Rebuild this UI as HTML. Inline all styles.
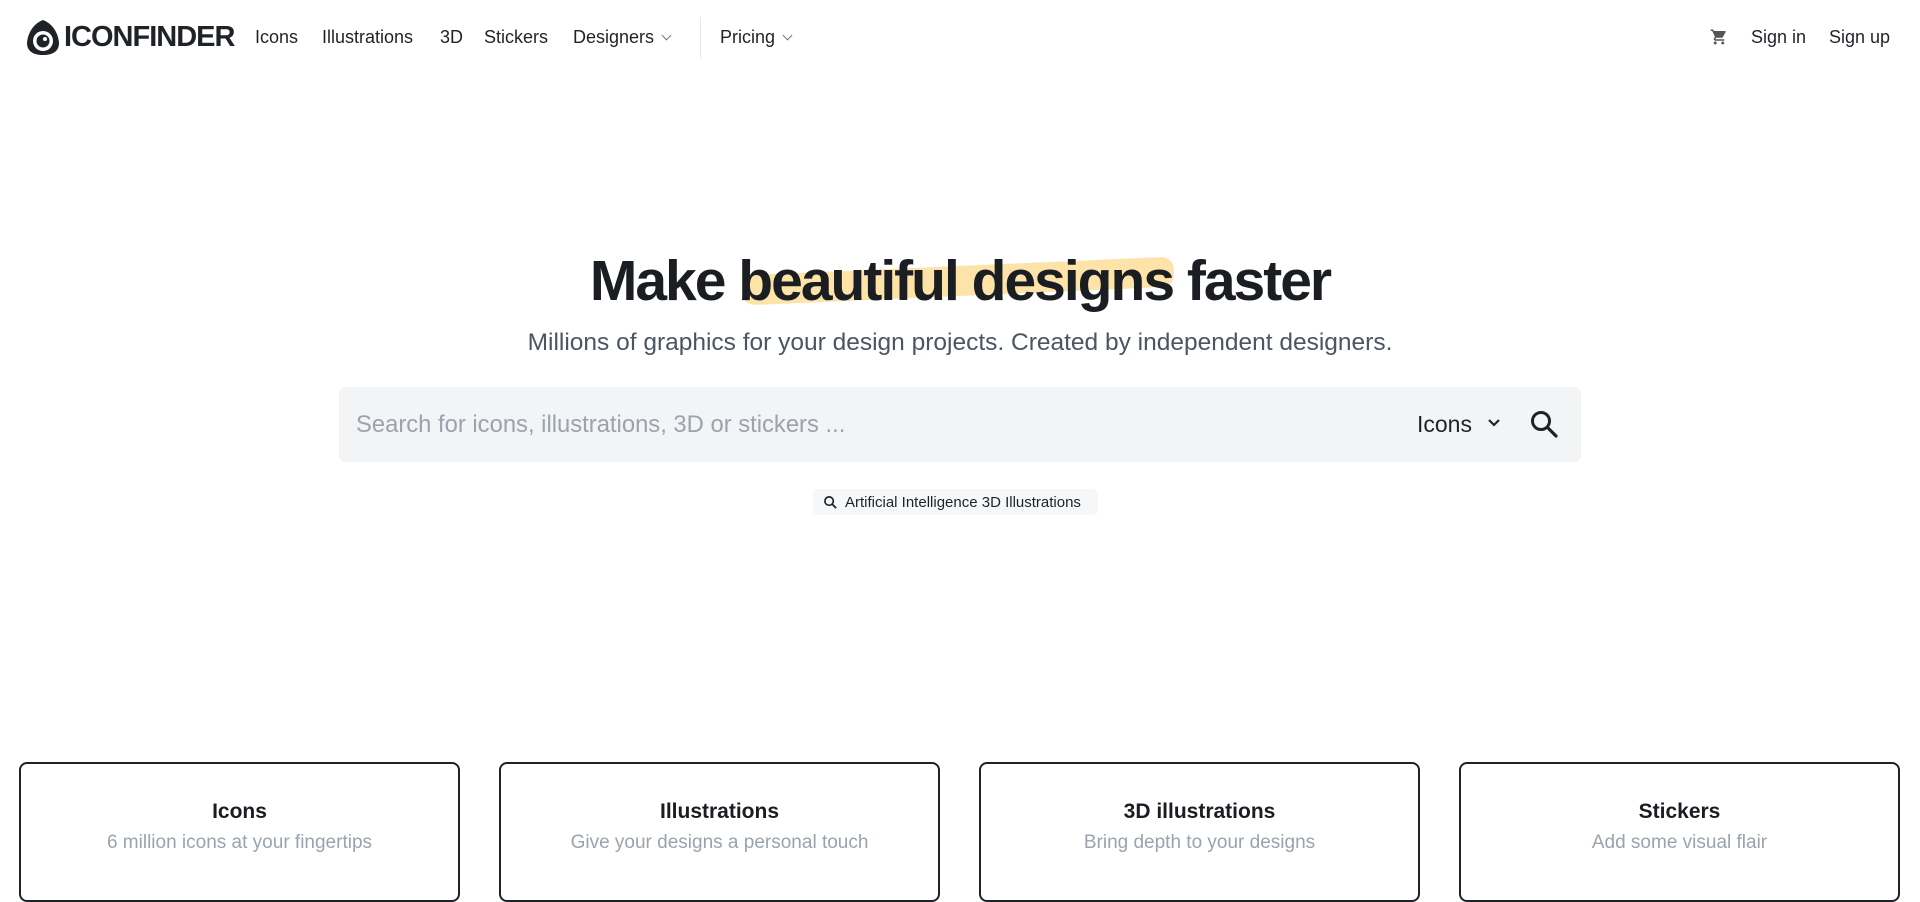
<!DOCTYPE html>
<html><head><meta charset="utf-8"><style>
*{box-sizing:border-box;margin:0;padding:0}
body{width:1920px;height:878px;overflow:hidden;background:#fff;font-family:"Liberation Sans",sans-serif;color:#1f2328;position:relative}
.a{position:absolute;white-space:nowrap}
.nav{font-size:18px;top:27px;color:#1f2328}
.chev{display:inline-block;width:7px;height:7px;border-right:1.5px solid #777;border-bottom:1.5px solid #777;transform:rotate(45deg);margin-left:9px;position:relative;top:-4px}
h1{position:absolute;left:0;width:1920px;text-align:center;top:248px;font-size:57px;font-weight:bold;letter-spacing:-2px;color:#1a1d21}
.hl{position:absolute;left:742px;top:266px;width:432px;height:30px;background:#fde3a7;transform:rotate(-2.5deg);border-radius:12px}
.card{position:absolute;top:762px;width:441px;height:140px;border:2px solid #1f2328;border-radius:8px;text-align:center}
.card b{display:block;margin-top:36px;font-size:21px;color:#1a1d21}
.card span{display:block;margin-top:8px;font-size:19px;color:#9aa3ae}
</style></head><body>
<svg class="a" style="left:25px;top:19px" width="36" height="37" viewBox="0 0 36 37"><path d="M18 1 C10 4 3 12 2 24 C2 32 8 36 18 36 C28 36 34 32 34 24 C33 12 26 4 18 1Z" fill="#1f2328"/><circle cx="18" cy="22" r="10" fill="#fff"/><circle cx="18" cy="22" r="6.5" fill="#1f2328"/><circle cx="20" cy="20" r="2" fill="#fff"/></svg>
<div class="a" style="left:64px;top:21px;font-size:29px;font-weight:bold;letter-spacing:-1px;color:#1f2328">ICONFINDER</div>
<div class="a nav" style="left:255px">Icons</div>
<div class="a nav" style="left:322px">Illustrations</div>
<div class="a nav" style="left:440px">3D</div>
<div class="a nav" style="left:484px">Stickers</div>
<div class="a nav" style="left:573px">Designers<span class="chev"></span></div>
<div class="a" style="left:700px;top:17px;width:1px;height:42px;background:#e5e7eb"></div>
<div class="a nav" style="left:720px">Pricing<span class="chev"></span></div>
<svg class="a" style="left:1710px;top:28px" width="18" height="18" viewBox="0 0 24 24"><path fill="#555" d="M7 18c-1.1 0-2 .9-2 2s.9 2 2 2 2-.9 2-2-.9-2-2-2zM1 2v2h2l3.6 7.6-1.4 2.4c-.1.3-.2.6-.2 1 0 1.1.9 2 2 2h12v-2H7.4c-.1 0-.2-.1-.2-.2v-.1l.9-1.7h7.4c.8 0 1.4-.4 1.7-1l3.6-6.5c.1-.2.2-.3.2-.5 0-.6-.4-1-1-1H5.2l-.9-2H1zm16 16c-1.1 0-2 .9-2 2s.9 2 2 2 2-.9 2-2-.9-2-2-2z"/></svg>
<div class="a nav" style="left:1751px">Sign in</div>
<div class="a nav" style="left:1829px">Sign up</div>
<div class="hl"></div>
<h1 style="position:absolute">Make beautiful designs faster</h1>
<div class="a" style="left:0;width:1920px;text-align:center;top:329px;font-size:24.5px;color:#4b5563">Millions of graphics for your design projects. Created by independent designers.</div>
<div class="a" style="left:339px;top:387px;width:1242px;height:75px;background:#f3f4f6;border-radius:6px"></div>
<div class="a" style="left:356px;top:411px;font-size:23.8px;color:#9aa3ae">Search for icons, illustrations, 3D or stickers ...</div>
<div class="a" style="left:1417px;top:411px;font-size:23px;color:#1f2328">Icons</div>
<svg class="a" style="left:1485px;top:414px" width="18" height="18" viewBox="0 0 18 18"><path d="M4 6 L9 11 L14 6" stroke="#1f2328" stroke-width="2.2" fill="none"/></svg>
<svg class="a" style="left:1528px;top:408px" width="32" height="32" viewBox="0 0 32 32"><circle cx="13" cy="13" r="8.5" stroke="#1f2328" stroke-width="3" fill="none"/><path d="M19.5 19.5 L28 28" stroke="#1f2328" stroke-width="3.2" stroke-linecap="round"/></svg>
<div class="a" style="left:813px;top:489px;width:285px;height:26px;background:#f6f7f8;border-radius:5px"></div>
<svg class="a" style="left:823px;top:495px" width="15" height="15" viewBox="0 0 16 16"><circle cx="6.5" cy="6.5" r="4.5" stroke="#1f2328" stroke-width="1.8" fill="none"/><path d="M10 10 L14 14" stroke="#1f2328" stroke-width="2"/></svg>
<div class="a" style="left:845px;top:494px;font-size:15px;color:#1f2328">Artificial Intelligence 3D Illustrations</div>
<div class="card" style="left:19px"><b>Icons</b><span>6 million icons at your fingertips</span></div>
<div class="card" style="left:499px"><b>Illustrations</b><span>Give your designs a personal touch</span></div>
<div class="card" style="left:979px"><b>3D illustrations</b><span>Bring depth to your designs</span></div>
<div class="card" style="left:1459px"><b>Stickers</b><span>Add some visual flair</span></div>
</body></html>
